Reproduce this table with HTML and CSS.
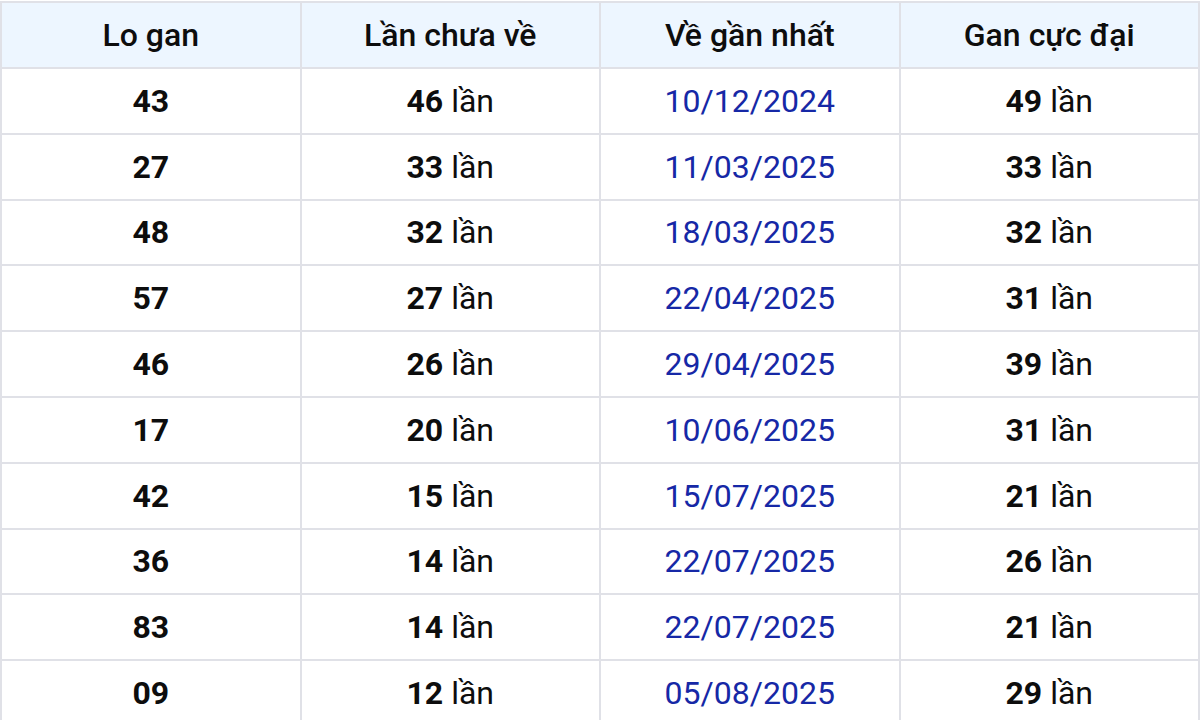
FILE: index.html
```html
<!DOCTYPE html>
<html lang="vi">
<head>
<meta charset="utf-8">
<link rel="stylesheet" href="styles.css">
</head>
<body>
<table class="gan">
  <thead>
    <tr><th>Lo gan</th><th>Lần chưa về</th><th>Về gần nhất</th><th>Gan cực đại</th></tr>
  </thead>
  <tbody>
    <tr><td class="num">43</td><td><b>46</b> lần</td><td class="date">10/12/2024</td><td><b>49</b> lần</td></tr>
    <tr><td class="num">27</td><td><b>33</b> lần</td><td class="date">11/03/2025</td><td><b>33</b> lần</td></tr>
    <tr><td class="num">48</td><td><b>32</b> lần</td><td class="date">18/03/2025</td><td><b>32</b> lần</td></tr>
    <tr><td class="num">57</td><td><b>27</b> lần</td><td class="date">22/04/2025</td><td><b>31</b> lần</td></tr>
    <tr><td class="num">46</td><td><b>26</b> lần</td><td class="date">29/04/2025</td><td><b>39</b> lần</td></tr>
    <tr><td class="num">17</td><td><b>20</b> lần</td><td class="date">10/06/2025</td><td><b>31</b> lần</td></tr>
    <tr><td class="num">42</td><td><b>15</b> lần</td><td class="date">15/07/2025</td><td><b>21</b> lần</td></tr>
    <tr><td class="num">36</td><td><b>14</b> lần</td><td class="date">22/07/2025</td><td><b>26</b> lần</td></tr>
    <tr><td class="num">83</td><td><b>14</b> lần</td><td class="date">22/07/2025</td><td><b>21</b> lần</td></tr>
    <tr><td class="num">09</td><td><b>12</b> lần</td><td class="date">05/08/2025</td><td><b>29</b> lần</td></tr>
  </tbody>
</table>
</body>
</html>
```
FILE: styles.css
```css
html, body {
  margin: 0;
  padding: 0;
  background: #ffffff;
}
body {
  font-family: Roboto, "Noto Sans", "Liberation Sans", sans-serif;
  color: #0d0d0d;
  padding-top: 1px;
}
.gan {
  width: 1200px;
  border-collapse: collapse;
  table-layout: fixed;
}
.gan th, .gan td {
  border: 2px solid #e0e1e7;
  text-align: center;
  vertical-align: middle;
  padding: 0;
  font-size: 32px;
  line-height: 1;
}
.gan th {
  background: #edf6ff;
  font-weight: 500;
  height: 64px;
}
.gan td {
  height: 63.8px;
  font-weight: 400;
}
.gan td b, .gan td.num {
  font-weight: 700;
}
.gan td.date {
  color: #1628a6;
}
```
